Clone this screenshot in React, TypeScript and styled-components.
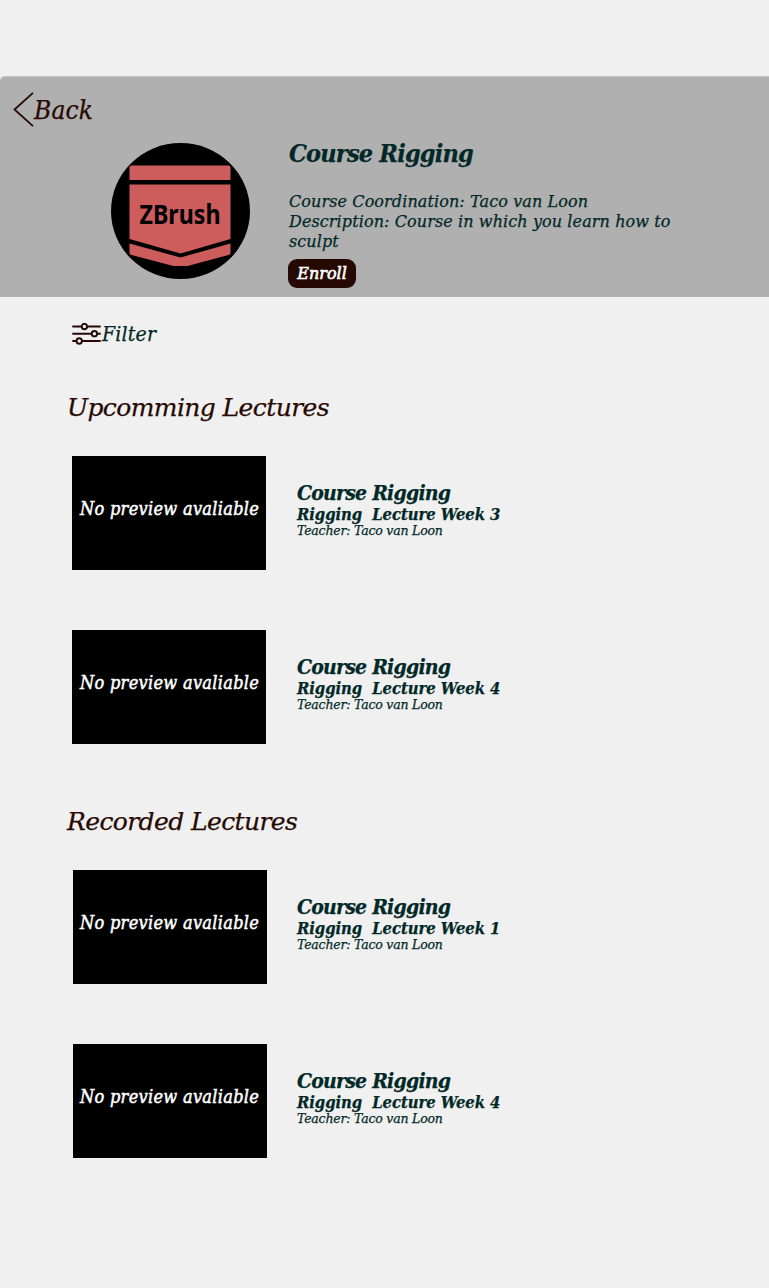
import React from "react";
import styled, { createGlobalStyle } from "styled-components";

const wide = `font-family: "DejaVu Serif", serif; font-stretch: normal;`;

const GlobalStyle = createGlobalStyle`
  * { box-sizing: border-box; }
  body {
    margin: 0;
    background: #f0f0f0;
    font-family: "DejaVu Serif Condensed", "DejaVu Serif", serif;
    font-style: italic;
    font-stretch: semi-condensed;
    color: #022827;
    -webkit-text-stroke: 0.25px currentColor;
  }
  h1, h2, h3, p { margin: 0; font-weight: 400; white-space: pre; }
`;

const Page = styled.main`
  min-height: 1288px;
  padding-top: 76px;
`;

const Header = styled.header`
  height: 221px;
  padding: 15px 0 0 13px;
  background: #b0b0b0;
  border-top: 1px solid #c4c4c4;
  border-top-left-radius: 5px;
`;

const BackLink = styled.a`
  display: flex;
  height: 35px;
  color: #270903;
  font-size: 26px;
  line-height: 36px;
  letter-spacing: 0.2px;
`;

const CourseRow = styled.div`
  display: flex;
  margin-top: 16px;
  padding-left: 98px;
`;

const CourseText = styled.div`
  display: flex;
  flex-direction: column;
  align-items: flex-start;
  margin-left: 39px;
`;

const CourseTitle = styled.h1`
  && { font-weight: 700; }
  font-size: 25px;
  line-height: 22px;
  letter-spacing: -0.8px;
`;

const Description = styled.p`
  && { margin-top: 27px; }
  ${wide}
  font-size: 16px;
  line-height: 20px;
  letter-spacing: 0.1px;
`;

const EnrollButton = styled.button`
  width: 68px;
  height: 29px;
  margin: 7px 0 0 -1px;
  padding: 0;
  border: 0;
  border-radius: 9px;
  background: #270903;
  color: #fff;
  font: inherit;
  ${wide}
  font-size: 16px;
  line-height: 29px;
  -webkit-text-stroke: 0.6px #fff;
`;

const FilterRow = styled.div`
  display: flex;
  align-items: center;
  height: 24px;
  margin: 25px 0 0 72px;
  font-size: 21px;
  line-height: 24px;
  letter-spacing: 0.2px;
`;

const Section = styled.section<{ $gap: number }>`
  margin-top: ${(p) => p.$gap}px;
`;

const SectionTitle = styled.h2`
  padding-left: 67px;
  color: #270903;
  ${wide}
  font-size: 25px;
  line-height: 30px;
  letter-spacing: -0.6px;
`;

const LectureList = styled.div<{ $indent: number }>`
  display: flex;
  flex-direction: column;
  gap: 60px;
  margin-top: 33px;
  padding-left: ${(p) => p.$indent}px;
`;

const LectureRow = styled.article`
  display: flex;
  height: 114px;
`;

const Preview = styled.div<{ $inset: number }>`
  width: 194px;
  margin-right: ${(p) => p.$inset + 23}px;
  padding: 42px 0 0 ${(p) => p.$inset}px;
  background: #000;
  color: #fff;
  font-size: 18px;
  line-height: 22px;
  letter-spacing: 0.3px;
  white-space: nowrap;
  -webkit-text-stroke: 0.5px #fff;
`;

const LectureInfo = styled.div`
  padding-top: 26px;
`;

const LectureCourse = styled.h3`
  && { font-weight: 700; }
  font-size: 21px;
  line-height: 22px;
  letter-spacing: -0.77px;
`;

const LectureName = styled.p`
  && { font-weight: 700; margin-top: 2px; }
  font-size: 16.5px;
  line-height: 18px;
  letter-spacing: -0.07px;
`;

const Teacher = styled.p`
  ${wide}
  font-size: 12.5px;
  line-height: 14px;
  letter-spacing: -0.2px;
`;

const BackIcon = () => (
  <svg width="21" height="35" viewBox="0 0 21 35" fill="none" stroke="#270903" strokeWidth="1.8">
    <path d="M20 .8 1.500 17.500 20 34.200" />
  </svg>
);

const FilterIcon = () => (
  <svg width="30" height="22" viewBox="0 0 30 22" fill="#f0f0f0" stroke="#270903" strokeWidth="1.9">
    <path d="M.3 3.500h28.400M.3 10.700h28.400M.3 18h28.400" />
    <circle cx="12.400" cy="3.500" r="2.700" />
    <circle cx="22.400" cy="10.700" r="2.700" />
    <circle cx="7.200" cy="18" r="2.700" />
  </svg>
);

const CourseLogo = () => (
  <svg width="139" height="136" viewBox="0 0 139 136">
    <ellipse cx="69.5" cy="68" rx="69.5" ry="68" />
    <g fill="#cd5c5c">
      <path d="M20.500 22.500h97q2 0 2 2v12.500H18.500V24.500q0-2 2-2Z" />
      <path d="M18.500 41.500h101v54.500l-50 14.500L18.500 96Z" />
      <path d="M18.500 100.500l51 14 50-14v9.500q0 1.500-2 2l-41 11h-14l-42-11q-2-.5-2-2Z" />
    </g>
    <text
      x="28.5"
      y="80.5"
      textLength="81"
      lengthAdjust="spacingAndGlyphs"
      fontFamily='"Noto Sans", sans-serif'
      fontStyle="normal"
      fontWeight="700"
      fontSize="26"
    >
      ZBrush
    </text>
  </svg>
);

type LectureGroup = { title: string; gap: number; indent: number; lectures: string[] };

const groups: LectureGroup[] = [
  { title: "Upcomming Lectures", gap: 47, indent: 72, lectures: ["Rigging  Lecture Week 3", "Rigging  Lecture Week 4"] },
  { title: "Recorded Lectures", gap: 63, indent: 73, lectures: ["Rigging  Lecture Week 1", "Rigging  Lecture Week 4"] },
];

export default function App() {
  return (
    <Page>
      <GlobalStyle />
      <Header>
        <BackLink>
          <BackIcon />
          Back
        </BackLink>
        <CourseRow>
          <CourseLogo />
          <CourseText>
            <CourseTitle>Course Rigging</CourseTitle>
            <Description>
              {"Course Coordination: Taco van Loon\nDescription: Course in which you learn how to\nsculpt"}
            </Description>
            <EnrollButton>Enroll</EnrollButton>
          </CourseText>
        </CourseRow>
      </Header>
      <FilterRow>
        <FilterIcon />
        Filter
      </FilterRow>
      {groups.map((group) => (
        <Section key={group.title} $gap={group.gap}>
          <SectionTitle>{group.title}</SectionTitle>
          <LectureList $indent={group.indent}>
            {group.lectures.map((name) => (
              <LectureRow key={name}>
                <Preview $inset={80 - group.indent}>No preview avaliable</Preview>
                <LectureInfo>
                  <LectureCourse>Course Rigging</LectureCourse>
                  <LectureName>{name}</LectureName>
                  <Teacher>Teacher: Taco van Loon</Teacher>
                </LectureInfo>
              </LectureRow>
            ))}
          </LectureList>
        </Section>
      ))}
    </Page>
  );
}
